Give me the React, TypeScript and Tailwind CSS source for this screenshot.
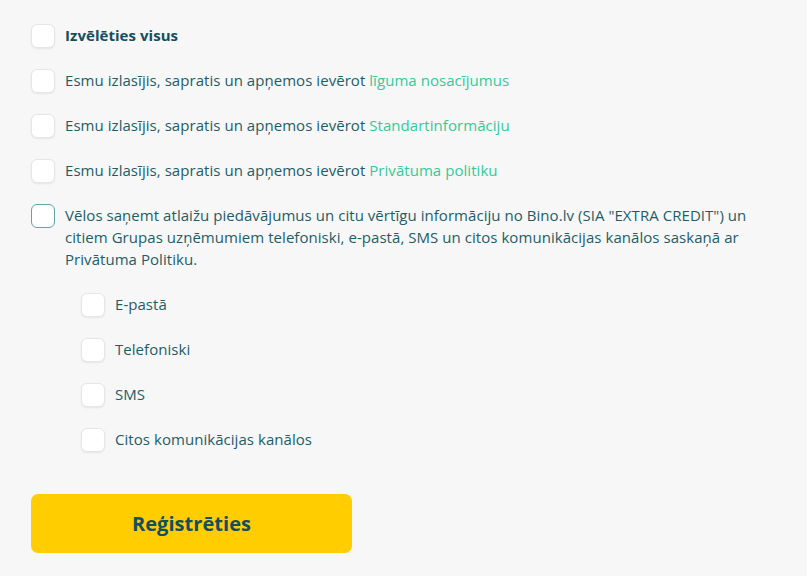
import React from "react";

const Box = ({ focus = false }: { focus?: boolean }) => (
  <span
    className={
      "block w-[24px] h-[24px] shrink-0 rounded-[6px] bg-white " +
      (focus
        ? "border-[1.5px] border-[#5aa6a8]"
        : "border border-[#e6e6e6] shadow-[0_1px_2px_rgba(0,0,0,0.08)]")
    }
  />
);

const Row = ({ children, focus = false }: { children: React.ReactNode; focus?: boolean }) => (
  <div className="flex items-start gap-[10px]">
    <Box focus={focus} />
    <div className="leading-[22px]">{children}</div>
  </div>
);

export default function App() {
  return (
    <div
      className="w-[807px] h-[576px] bg-[#f7f7f7] text-[#1e5d66] text-[15px] tracking-[0.05px] pl-[31px] pt-[24px] overflow-hidden"
      style={{ fontFamily: "'Open Sans', 'Noto Sans', sans-serif" }}
    >
      <div className="flex flex-col gap-[21px] w-[745px]">
        <Row>
          <span className="font-bold text-[#134f5c]">Izvēlēties visus</span>
        </Row>
        <Row>
          Esmu izlasījis, sapratis un apņemos ievērot{" "}
          <span className="text-[#35c999]">līguma nosacījumus</span>
        </Row>
        <Row>
          Esmu izlasījis, sapratis un apņemos ievērot{" "}
          <span className="text-[#35c999]">Standartinformāciju</span>
        </Row>
        <Row>
          Esmu izlasījis, sapratis un apņemos ievērot{" "}
          <span className="text-[#35c999]">Privātuma politiku</span>
        </Row>
        <Row focus>
          Vēlos saņemt atlaižu piedāvājumus un citu vērtīgu informāciju no Bino.lv (SIA "EXTRA CREDIT") un citiem
          Grupas uzņēmumiem telefoniski, e-pastā, SMS un citos komunikācijas kanālos saskaņā ar Privātuma Politiku.
        </Row>
        <div className="flex flex-col gap-[21px] pl-[50px] pt-[2px]">
          <Row>E-pastā</Row>
          <Row>Telefoniski</Row>
          <Row>SMS</Row>
          <Row>Citos komunikācijas kanālos</Row>
        </div>
      </div>
      <button className="mt-[42px] w-[321px] h-[59px] rounded-[7px] bg-[#ffcd00] text-[#134f5c] font-bold text-[20px] flex items-center justify-center">
        Reģistrēties
      </button>
    </div>
  );
}
